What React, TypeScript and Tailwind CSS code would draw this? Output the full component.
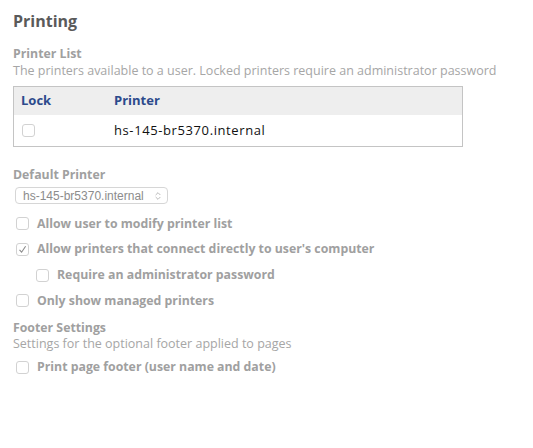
import { ChevronsUpDown } from 'lucide-react'

function Box({ checked = false }: { checked?: boolean }) {
  return (
    <span className="flex h-[13px] w-[13px] shrink-0 items-center justify-center rounded-[3px] border border-[#d2d2d2] bg-white">
      {checked && (
        <svg width="9" height="9" viewBox="0 0 9 9" fill="none">
          <path d="M1.5 4.8 L3.6 7.2 L7.6 1.2" stroke="#8a8a8a" strokeWidth="1.1" />
        </svg>
      )}
    </span>
  )
}

function Option({ label, checked, indent }: { label: string; checked?: boolean; indent?: boolean }) {
  return (
    <label className={`flex h-[25.7px] items-center gap-[8px] ${indent ? 'pl-[23px]' : 'pl-[3px]'}`}>
      <Box checked={checked} />
      <span className="text-[12.3px] font-bold text-[#a0a0a0]">{label}</span>
    </label>
  )
}

export default function App() {
  return (
    <div className="h-[448px] w-[533px] bg-white px-[13px] pt-[9px] font-['Open_Sans',sans-serif]">
      <h2 className="text-[16px] font-bold leading-[24px] text-[#5a5a5a]">Printing</h2>

      <div className="mt-[12px]">
        <div className="text-[12.3px] font-bold leading-[17px] text-[#a0a0a0]">Printer List</div>
        <p className="text-[12.5px] leading-[17px] text-[#a6a6a6]">
          The printers available to a user. Locked printers require an administrator password
        </p>
      </div>

      <div className="mt-[7px] w-[450px] border border-[#c4c4c4]">
        <div className="flex h-[28px] items-center bg-[#eeeeee] text-[13px] font-bold text-[#2c4a8c]">
          <span className="w-[100px] pl-[7px]">Lock</span>
          <span>Printer</span>
        </div>
        <div className="flex h-[31px] items-center text-[13px] tracking-[0.6px] text-[#111]">
          <span className="w-[100px] pl-[8px]">
            <Box />
          </span>
          <span>hs-145-br5370.internal</span>
        </div>
      </div>

      <div className="mt-[19px] text-[12.3px] font-bold leading-[17px] text-[#a0a0a0]">Default Printer</div>
      <div className="mt-[4px] ml-[2px] flex h-[17px] w-[153px] items-center justify-between rounded-[4px] border border-[#d6d6d6] pl-[7px] pr-[4px] font-['Liberation_Sans',sans-serif] text-[12px] text-[#8c8c8c]">
        <span>hs-145-br5370.internal</span>
        <ChevronsUpDown size={10} strokeWidth={1.6} className="text-[#999]" />
      </div>

      <div className="mt-[7px]">
        <Option label="Allow user to modify printer list" />
        <Option label="Allow printers that connect directly to user's computer" checked />
        <Option label="Require an administrator password" indent />
        <Option label="Only show managed printers" />
      </div>

      <div className="mt-[5px] text-[12.3px] font-bold leading-[17px] text-[#a0a0a0]">Footer Settings</div>
      <p className="text-[12.5px] leading-[16px] text-[#a6a6a6]">Settings for the optional footer applied to pages</p>
      <div className="mt-[3px]">
        <Option label="Print page footer (user name and date)" />
      </div>
    </div>
  )
}
